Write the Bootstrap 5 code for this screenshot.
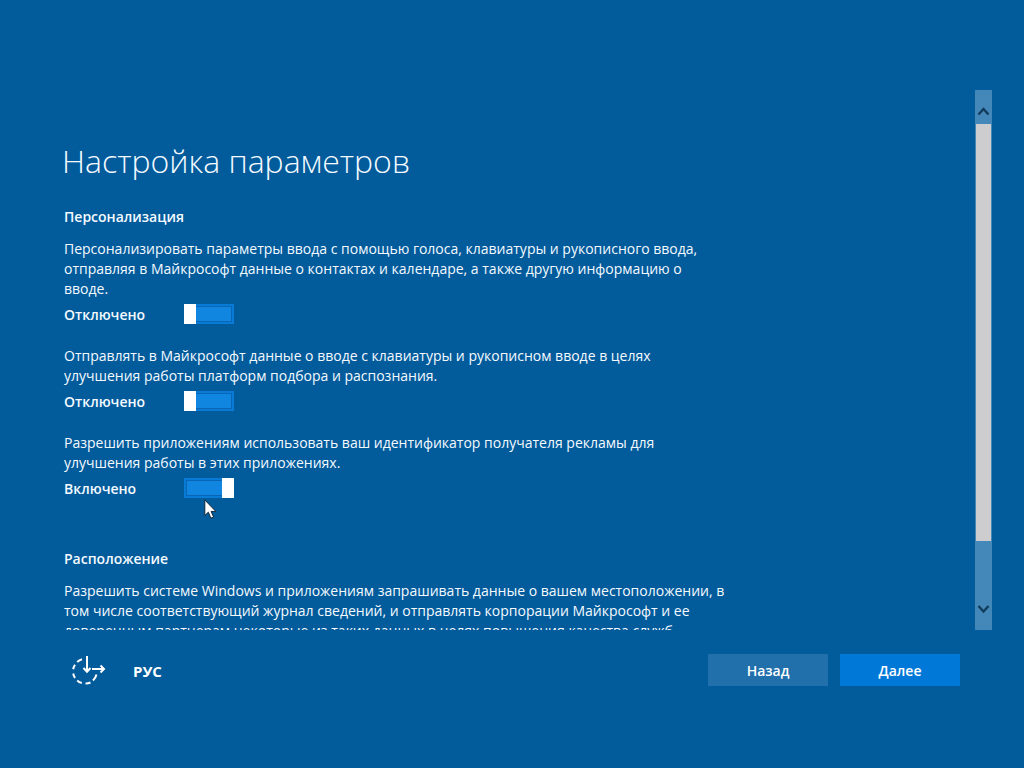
<!DOCTYPE html>
<html lang="ru">
<head>
<meta charset="utf-8">
<meta name="viewport" content="width=device-width, initial-scale=1">
<title>Настройка параметров</title>
<link rel="stylesheet" href="https://cdn.jsdelivr.net/npm/bootstrap@5.3.0/dist/css/bootstrap.min.css">
<style>
body{background:#025b9b;color:#f4faff;font-family:"Open Sans","Noto Sans",sans-serif;font-size:14px;line-height:20px}
.setup{padding:90px 32px 82px 60px}
.pane{min-height:0}
.title{font-size:32px;line-height:48px;font-weight:300;margin:47px 0 22px -2px}
.section-title{font-size:14px;line-height:20px;font-weight:600;margin:0 0 12px}
.line{display:block;white-space:nowrap}
.option{margin-bottom:22px}
.option p{margin:0 0 5px}
.option .state{width:120px;font-weight:600;padding-top:1px}
.option .state,.switch-box{height:20px}
.option-last{margin-bottom:51px}
.switch-box{appearance:none;display:block;width:50px;margin:0;background:#1086e0;border:2px solid #087bd6;outline:1px solid #0a66b5;outline-offset:-3px;position:relative}
.switch-box::before{content:"";position:absolute;top:-2px;left:-2px;width:12px;height:20px;background:#fff}
.switch-box:checked::before{left:auto;right:-2px}
.pointer{position:absolute;left:20px;top:21px}
.scroller{width:17px;background:#4388b8}
.scroller button{height:34px;padding:0;border:0;background:none;line-height:0}
.scroller .thumb{height:417px;margin:0 1px;background:#cdcdcf}
.footer-bar{margin-top:24px;padding:0 32px 0 4px}
.actions{gap:12px}
.action{width:120px;height:32px;padding:0;border:0;border-radius:0;font-size:14px;font-weight:600;color:#fff;background:#216fab}
.action-next{background:#0078d7}
.plain{padding:0;border:0;background:none;color:#fff;font-size:15px;font-weight:700}
.lang{margin-left:27px;padding-top:2px}
</style>
</head>
<body>
<div class="setup vh-100 d-flex flex-column">
  <div class="pane d-flex flex-grow-1">
    <main class="flex-grow-1 overflow-hidden ps-1">
      <h1 class="title">Настройка параметров</h1>
      <section>
        <h2 class="section-title">Персонализация</h2>
        <div class="option">
          <p><span class="line">Персонализировать параметры ввода с помощью голоса, клавиатуры и рукописного ввода,</span>
          <span class="line">отправляя в Майкрософт данные о контактах и календаре, а также другую информацию о</span>
          <span class="line">вводе.</span></p>
          <div class="d-flex"><label class="state" for="s1">Отключено</label><input class="switch-box" type="checkbox" role="switch" id="s1"></div>
        </div>
        <div class="option">
          <p><span class="line">Отправлять в Майкрософт данные о вводе с клавиатуры и рукописном вводе в целях</span>
          <span class="line">улучшения работы платформ подбора и распознания.</span></p>
          <div class="d-flex"><label class="state" for="s2">Отключено</label><input class="switch-box" type="checkbox" role="switch" id="s2"></div>
        </div>
        <div class="option option-last">
          <p><span class="line">Разрешить приложениям использовать ваш идентификатор получателя рекламы для</span>
          <span class="line">улучшения работы в этих приложениях.</span></p>
          <div class="d-flex"><label class="state" for="s3">Включено</label>
            <div class="position-relative"><input class="switch-box" type="checkbox" role="switch" id="s3" checked>
              <svg class="pointer" width="14" height="21" viewBox="0 0 14 21" aria-hidden="true"><path d="M.8 1v15.500l3.500-3.300 2.600 6 2.700-1.200-2.500-5.600h4.800z" fill="#fff" stroke="#10263a" stroke-width="1"/></svg>
            </div>
          </div>
        </div>
      </section>
      <section>
        <h2 class="section-title">Расположение</h2>
        <p><span class="line">Разрешить системе Windows и приложениям запрашивать данные о вашем местоположении, в</span>
        <span class="line">том числе соответствующий журнал сведений, и отправлять корпорации Майкрософт и ее</span>
        <span class="line">доверенным партнерам некоторые из таких данных в целях повышения качества служб</span></p>
      </section>
    </main>
    <div class="scroller d-flex flex-column flex-shrink-0">
      <button type="button" aria-label="Вверх"><svg width="17" height="34" viewBox="0 0 17 34"><path d="M3.500 24.500l5-5.500 5 5.500" fill="none" stroke="#123c5c" stroke-width="2.400"/></svg></button>
      <div class="thumb"></div>
      <button type="button" class="mt-auto" aria-label="Вниз"><svg width="17" height="34" viewBox="0 0 17 34"><path d="M3.500 10l5 5.500 5-5.500" fill="none" stroke="#123c5c" stroke-width="2.400"/></svg></button>
    </div>
  </div>
  <footer class="footer-bar d-flex align-items-center">
    <button type="button" class="plain ms-2" aria-label="Специальные возможности"><svg class="d-block" width="34" height="32" viewBox="0 0 34 32" fill="none" stroke="#fff" stroke-width="2"><path d="M10 5.200A12 12 0 0 0 5.200 8M3 10.800A12 12 0 0 0 1.200 15.300M1.200 19.500A12 12 0 0 0 3 24M5.200 26.500A12 12 0 0 0 9.800 29M13.500 29.500A12 12 0 0 0 18.500 28.500M21 26.500A12 12 0 0 0 24.500 20.500"/><path d="M15 2V17M11.500 14l3.500 3.800 3.500-3.800M20 15h12M28.500 11.500L32 15l-3.500 3.500"/></svg></button>
    <button type="button" class="plain lang">РУС</button>
    <div class="actions d-flex ms-auto">
      <button type="button" class="btn action">Назад</button>
      <button type="button" class="btn action action-next">Далее</button>
    </div>
  </footer>
</div>
<script src="https://cdn.jsdelivr.net/npm/bootstrap@5.3.0/dist/js/bootstrap.bundle.min.js"></script>
</body>
</html>
